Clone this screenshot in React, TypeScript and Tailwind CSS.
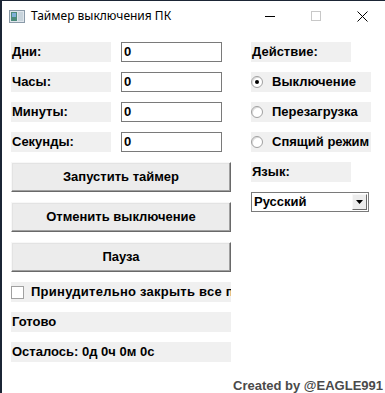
import { useState } from "react";

const font = { fontFamily: '"Liberation Sans", Arial, sans-serif' };

function Label({ text, wide = false }: { text: string; wide?: boolean }) {
  return (
    <div
      className={`h-5 ${wide ? "w-[220px]" : "w-[100px]"} bg-[#f0f0f0] pl-px text-[13px] font-bold leading-5 text-black`}
    >
      {text}
    </div>
  );
}

function Field({ label }: { label: string }) {
  return (
    <div className="flex h-5 gap-[10px]">
      <Label text={label} />
      <div className="h-5 w-[101px] border border-[#7a7a7a] bg-white pl-[2px] text-[13px] font-bold leading-[18px]">
        0
      </div>
    </div>
  );
}

function ClassicButton({ text }: { text: string }) {
  return (
    <button className="h-[30px] w-[220px] border border-t-[#f8f8f8] border-l-[#f8f8f8] border-r-[#696969] border-b-[#696969] bg-[#ececec] text-[13px] font-bold text-black shadow-[inset_-1px_-1px_0_#a0a0a0,inset_1px_1px_0_#e3e3e3]">
      {text}
    </button>
  );
}

function Radio({ text, checked }: { text: string; checked?: boolean }) {
  return (
    <div className="flex h-5 w-[120px] items-center gap-[9px] whitespace-nowrap bg-[#f0f0f0] text-[13px] font-bold">
      <span className="flex h-[12px] w-[12px] shrink-0 items-center justify-center rounded-full border border-[#a0a0a0] bg-white shadow-[inset_1px_1px_0_#dcdcdc]">
        {checked && <span className="h-[4px] w-[4px] rounded-full bg-black" />}
      </span>
      <span>{text}</span>
    </div>
  );
}

export default function App() {
  const [force, setForce] = useState(false);

  return (
    <div
      className="flex h-[393px] w-[385px] flex-col overflow-hidden border-l-2 border-t border-[#1b2535] bg-white"
      style={font}
    >
      {/* Заголовок окна */}
      <div className="flex h-[30px] shrink-0 items-center">
        <svg width="16" height="13" viewBox="0 0 16 13" className="ml-[7px]">
          <rect x="0.5" y="0.5" width="15" height="12" fill="#dfe6ec" stroke="#8a9aa8" />
          <rect x="2" y="2" width="6" height="9" fill="#4a8a7a" />
          <rect x="3" y="3" width="4" height="4" fill="#7fb0d8" />
          <rect x="9" y="2" width="5" height="9" fill="#c8d4dc" />
        </svg>
        <span
          className="ml-[6px] text-[12px] text-black"
          style={{ fontFamily: '"Noto Sans", "Open Sans", sans-serif' }}
        >
          Таймер выключения ПК
        </span>
        <div className="ml-auto flex h-full items-center">
          <div className="flex w-[46px] justify-center">
            <div className="h-px w-[10px] bg-black" />
          </div>
          <div className="flex w-[46px] justify-center">
            <div className="h-[10px] w-[10px] border border-[#c8c8c8]" />
          </div>
          <div className="flex w-[46px] justify-center">
            <svg width="11" height="11" viewBox="0 0 11 11">
              <path d="M0.5 0.5 L10.5 10.5 M10.5 0.5 L0.5 10.5" stroke="#000" strokeWidth="1" />
            </svg>
          </div>
        </div>
      </div>

      {/* Содержимое */}
      <div className="flex gap-5 pl-[9px] pt-[11px]">
        <div className="flex w-[220px] flex-col gap-[10px]">
          <Field label="Дни:" />
          <Field label="Часы:" />
          <Field label="Минуты:" />
          <Field label="Секунды:" />
          <ClassicButton text="Запустить таймер" />
          <ClassicButton text="Отменить выключение" />
          <ClassicButton text="Пауза" />
          <div
            className="flex h-5 w-[220px] cursor-default items-center gap-[7px] overflow-hidden whitespace-nowrap bg-[#f0f0f0] text-[13px] font-bold"
            onClick={() => setForce((v) => !v)}
          >
            <span className="flex h-[13px] w-[13px] shrink-0 items-center justify-center border border-[#a0a0a0] bg-white text-[10px] leading-none">
              {force ? "✓" : ""}
            </span>
            <span className="tracking-[0.25px]">Принудительно закрыть все программы</span>
          </div>
          <Label text="Готово" wide />
          <Label text="Осталось: 0д 0ч 0м 0с" wide />
        </div>

        <div className="flex w-[120px] flex-col gap-[10px]">
          <Label text="Действие:" />
          <Radio text="Выключение" checked />
          <Radio text="Перезагрузка" />
          <Radio text="Спящий режим" />
          <Label text="Язык:" />
          <div className="flex h-5 w-[118px] items-center border border-[#7a7a7a] bg-white pl-[2px] text-[13px] font-bold">
            <span>Русский</span>
            <span className="ml-auto mr-px flex h-4 w-[15px] items-center justify-center border border-t-[#f8f8f8] border-l-[#f8f8f8] border-r-[#696969] border-b-[#696969] bg-[#ececec]">
              <svg width="7" height="4" viewBox="0 0 7 4">
                <path d="M0 0 H7 L3.5 4 Z" fill="#000" />
              </svg>
            </span>
          </div>
        </div>
      </div>

      <div className="mt-[14px] flex justify-end pr-[2px] text-[13px] font-bold text-[#4a4a4a]">
        Created by @EAGLE991
      </div>
    </div>
  );
}
